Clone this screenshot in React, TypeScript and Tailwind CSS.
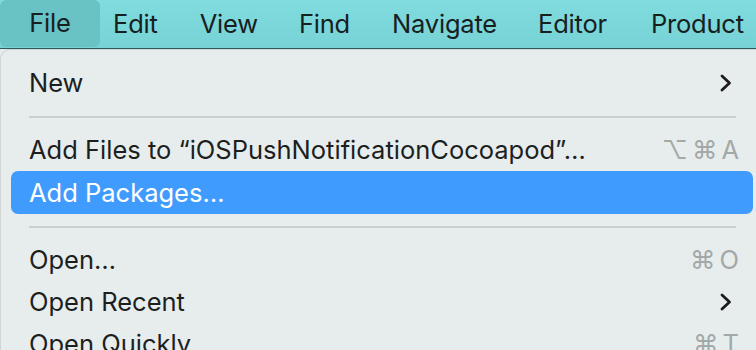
import React from "react";

const font = { fontFamily: "Inter, 'Noto Sans', sans-serif" };

function Chevron() {
  return (
    <svg width="14" height="20" viewBox="0 0 14 20" className="text-[#1c1c1c]">
      <path d="M3 3 L10.5 10 L3 17" fill="none" stroke="currentColor" strokeWidth="2.8" strokeLinecap="round" strokeLinejoin="round" />
    </svg>
  );
}

function Item({ label, right, active }: { label: string; right?: React.ReactNode; active?: boolean }) {
  return (
    <div
      className={`ml-[10px] mr-[3px] h-[42px] flex items-center justify-between pl-[18px] pr-[20px] rounded-[7px] ${
        active ? "bg-[#3f9bfd] text-white h-[43px]" : "text-[#1d1f1f]"
      }`}
    >
      <span className="text-[25.5px] leading-none tracking-normal">{label}</span>
      {right}
    </div>
  );
}

function Shortcut({ keys }: { keys: string[] }) {
  return (
    <span className="flex gap-[4px] text-[25.5px] leading-none text-[#a3a8a8] -mr-[6px]">
      {keys.map((k, i) => (
        <span key={i}>{k}</span>
      ))}
    </span>
  );
}

function Sep() {
  return (
    <div className="h-[25px] flex items-center ml-[28px] mr-[20px]">
      <div className="h-[2px] w-full bg-[#c9cfcf]" />
    </div>
  );
}

export default function App() {
  return (
    <div className="w-[756px] h-[350px] overflow-hidden bg-[#e6ecec]" style={font}>
      <div className="h-[49px] bg-gradient-to-b from-[#80dcde] to-[#76d2d4] border-b border-[#2a5c5e] flex items-stretch text-[25.5px] text-[#17201f] tracking-[-0.2px]">
        <div className="w-[100px] h-[47px] rounded-[6px] bg-[#69c2c4] flex items-center justify-center">File</div>
        <div className="flex items-center ml-[13px]">Edit</div>
        <div className="flex items-center ml-[42px]">View</div>
        <div className="flex items-center ml-[41px]">Find</div>
        <div className="flex items-center ml-[42px]">Navigate</div>
        <div className="flex items-center ml-[41px]">Editor</div>
        <div className="flex items-center ml-[44px]">Product</div>
      </div>
      <div className="rounded-tl-[10px] bg-[#e7eded] border-l border-t border-[#d0d6d6] pt-[12px] h-[301px]">
        <Item label="New" right={<Chevron />} />
        <Sep />
        <Item label="Add Files to “iOSPushNotificationCocoapod”…" right={<Shortcut keys={["⌥", "⌘", "A"]} />} />
        <Item label="Add Packages…" active />
        <Sep />
        <Item label="Open…" right={<Shortcut keys={["⌘", "O"]} />} />
        <Item label="Open Recent" right={<Chevron />} />
        <Item label="Open Quickly" right={<Shortcut keys={["⌘", "T"]} />} />
      </div>
    </div>
  );
}
